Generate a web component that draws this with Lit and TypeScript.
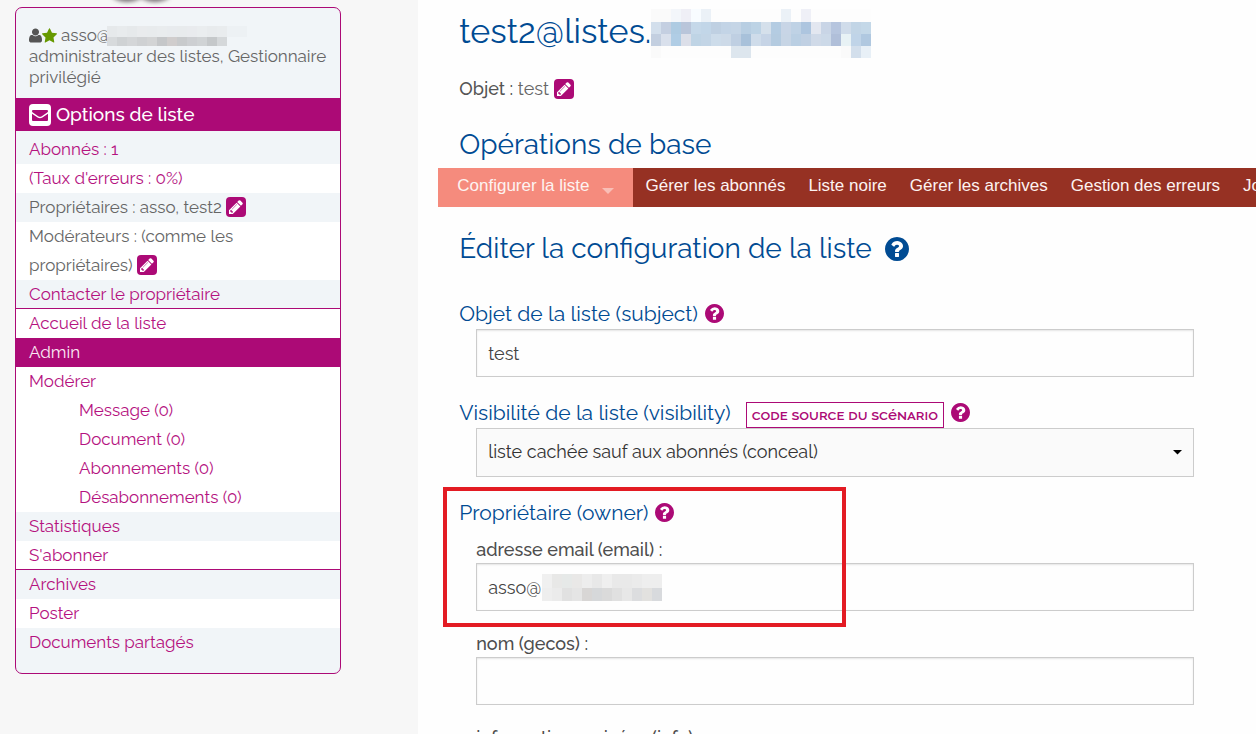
import { LitElement, html, css, svg, nothing } from "lit";
import { customElement, property } from "lit/decorators.js";

const PATHS: Record<string, string> = {
  pencil:
    "M491 1536l91-91-235-235-91 91v107h128v128h107zm523-928q0-22-22-22-10 0-17 7l-542 542q-7 7-7 17 0 22 22 22 10 0 17-7l542-542q7-7 7-17zm-54-192l416 416-832 832h-416v-416zm683 96q0 53-37 90l-166 166-416-416 166-165q36-38 90-38 53 0 91 38l235 234q37 39 37 91z",
  help:
    "M1024 1376v-192q0-14-9-23t-23-9h-192q-14 0-23 9t-9 23v192q0 14 9 23t23 9h192q14 0 23-9t9-23zm256-672q0-88-55.500-163t-138.500-116-170-41q-243 0-371 213-15 24 8 42l132 100q7 6 19 6 16 0 25-12 53-68 86-92 34-24 86-24 48 0 85.500 26t37.500 59q0 38-20 61t-68 45q-63 28-115.500 86.500t-52.500 125.500v36q0 14 9 23t23 9h192q14 0 23-9t9-23q0-19 21.500-49.500t54.500-49.500q32-18 49-28.500t46-35 44.500-48 28-60.500 12.500-81zm384 192q0 209-103 385.500t-279.500 279.500-385.500 103-385.500-103-279.500-279.500-103-385.500 103-385.500 279.500-279.500 385.500-103 385.500 103 279.500 279.500 103 385.500z",
  star:
    "M1728 647q0 22-26 48l-363 354 86 500q1 7 1 20 0 21-10.500 35.500t-30.500 14.500q-19 0-40-12l-449-236-449 236q-22 12-40 12-21 0-31.500-14.500t-10.500-35.500q0-6 2-20l86-500-364-354q-25-27-25-48 0-37 56-46l502-73 225-455q19-41 49-41t49 41l225 455 502 73q56 9 56 46z",
  user:
    "M1600 1405q0 120-73 189.500t-194 69.500h-874q-121 0-194-69.500t-73-189.500q0-53 3.500-103.500t14-109 26.500-108.500 43-97.500 62-81 85.500-53.500 111.500-20q9 0 42 21.500t74.500 48 108 48 133.500 21.500 133.500-21.500 108-48 74.500-48 42-21.500q61 0 111.500 20t85.500 53.500 62 81 43 97.500 26.500 108.500 14 109 3.500 103.500zm-320-893q0 159-112.500 271.500t-271.500 112.500-271.500-112.500-112.500-271.500 112.500-271.500 271.500-112.500 271.500 112.500 112.500 271.500z",
};

const BOXES: Record<string, string> = {
  pencil: "128 128 1536 1536",
  help: "128 128 1536 1536",
  star: "64 64 1664 1664",
  user: "192 128 1408 1536",
};

const icon = (name: string) => html`
  <svg class="icon ${name}" viewBox=${BOXES[name]} aria-hidden="true">
    <path fill="currentColor" d=${PATHS[name]}></path>
  </svg>
`;

const editLink = (label: string) => html`<a class="edit" href="#" aria-label=${label}>${icon("pencil")}</a>`;

/** Pixelated block that hides a private domain name. */
@customElement("masked-text")
export class MaskedText extends LitElement {
  @property({ attribute: false }) rows: string[][] = [];
  @property({ attribute: false }) heights: number[] = [];
  @property({ type: Number }) cell = 10;

  static styles = css`
    :host {
      display: inline-block;
    }
    svg {
      display: block;
    }
  `;

  render() {
    const width = Math.max(0, ...this.rows.map((r) => r.length)) * this.cell;
    const height = this.heights.reduce((a, b) => a + b, 0);
    let y = 0;
    const cells = this.rows.map((row, r) => {
      const top = y;
      y += this.heights[r];
      return row.map((c, i) =>
        c
          ? svg`<rect x=${i * this.cell} y=${top} width=${this.cell} height=${this.heights[r]} fill=${"#" + c}></rect>`
          : nothing
      );
    });
    return html`<svg width=${width} height=${height} shape-rendering="crispEdges" aria-hidden="true">${cells}</svg>`;
  }
}

const split = (s: string) => s.split(" ").map((c) => (c === "-" ? "" : c));

const TITLE_MASK = [
  split("fafafa fafafa f3f6fa efeff6 f8fcff ebf1f7 fdfdfd fdfdfd fdfdfd fdfdfd fdfdfd fdfdfd fdfdfd ebf1f7 fdfdfd eff0f7 fdfdfd fdfdfd fdfdfd fdfdfd fdfdfd fdfdfd"),
  split("d3dfec c4cfe1 aecbe2 b9c5da c5d8e9 c2d6e8 bfd0e2 c3d4e6 c5d5e6 b8cee2 bdd3e5 d5e0eb b4cce2 c8d5e6 bfd2e5 adc5df e3e7f0 c9d5e6 b6c5de d0dcea c2d5e6 c4d8e8"),
  split("c3cfe0 d9e0ec b0cde5 dcdfe9 bfd4e5 c3d5e6 cddcea cddae8 bfcfe2 a8c1da cfdcea c6d4e6 b4cbe0 c7d5e5 bacfe3 c0d0e3 d0dae8 ccd9e8 b0bfd9 e8f2f5 c0d4e8 b0c8e0"),
  split("fafafa fdfdfd fdfdfd fdfdfd fdfdfd fdfdfd fdfdfd fdfdfd dde6ee dde6ee fdfdfd fdfdfd fdfdfd fdfdfd fdfdfd fdfdfd fdfdfd fdfdfd fdfdfd fafafa d3dfec e8f0f7"),
];

const USER_MASK = [
  split("e6e9eb e8ebed e6e9eb e9ebed e8ebed e9ecee e8ebee e8ebed e9ebee eaedef e8ebed e9ecee edf1f4 edf1f4"),
  split("d7dadc cfd2d4 d4d6d8 cfd1d3 d3d4d5 c5c7c9 d0cdcd c8cacc cdcfd2 d0d3d5 c5c8ca d5d8da - -"),
];

const EMAIL_MASK = [
  split("f0f0f0 e8e8e7 e6e9e8 e9e8e7 ededed e8e8e8 efefef e9e9e9 e9e9e9 ebebeb eeeeee eeeeee"),
  split("eeeeee ebebeb e1e1e1 e5e5e5 d8d6d5 d6d8da dadada e0e0e0 e7e7e7 dcdddf e2e1df d8dadd"),
];

@customElement("list-sidebar")
export class ListSidebar extends LitElement {
  static styles = css`
    :host {
      display: block;
      padding: 0 77px 0 15px;
      font-size: 17px;
      line-height: 29px;
    }
    .logo {
      display: block;
      height: 7px;
      width: 100%;
    }
    .panel {
      border: 1px solid #ac0a76;
      border-radius: 7px;
      background: #f1f5f8;
      overflow: hidden;
      padding-bottom: 16px;
      color: #666;
    }
    .user {
      padding: 17px 13px 10px;
      line-height: 21px;
    }
    .account {
      display: flex;
      align-items: center;
      height: 21px;
    }
    .account span {
      padding-left: 4px;
    }
    .account masked-text {
      margin-left: -4px;
    }
    .user p {
      margin: 0;
    }
    .icon.user {
      padding: 0;
      width: 13px;
      height: 15px;
      color: #555;
    }
    .star {
      width: 15px;
      height: 16px;
      color: #690;
    }
    h2 {
      margin: 0;
      padding: 0 13px;
      height: 33px;
      display: flex;
      align-items: center;
      gap: 5px;
      background: #ac0a76;
      color: #fff;
      font-size: 19px;
      font-weight: 500;
    }
    .mail {
      width: 22px;
      height: 22px;
    }
    ul {
      list-style: none;
      margin: 0;
      padding: 0;
    }
    li {
      box-sizing: border-box;
      min-height: 29px;
      padding: 0 13px;
      background: #fff;
    }
    li.alt {
      background: #f1f5f8;
    }
    li.first {
      padding-top: 4px;
    }
    li.end {
      height: 29px;
      border-bottom: 1px solid #ac0a76;
    }
    li.current {
      background: #ac0a76;
    }
    li.sub {
      padding-left: 63px;
    }
    a {
      color: #b5127f;
      text-decoration: none;
    }
    .current a {
      color: #fbe9f4;
    }
    .edit {
      display: inline-flex;
      align-items: center;
      justify-content: center;
      width: 20px;
      height: 20px;
      border-radius: 4px;
      background: #ac0a76;
      color: #fff;
      vertical-align: -1px;
    }
    .pencil {
      width: 14px;
      height: 14px;
    }
  `;

  private item(text: string, cls = "") {
    return html`<li class=${cls}><a href="#">${text}</a></li>`;
  }

  render() {
    return html`
      <svg class="logo" aria-hidden="true">
        <defs>
          <filter id="soft" x="-20%" y="-100%" width="140%" height="300%"><feGaussianBlur stdDeviation="2"></feGaussianBlur></filter>
        </defs>
        <g filter="url(#soft)" fill="#777074">
          <ellipse cx="112" cy="-7" rx="16" ry="9"></ellipse>
          <ellipse cx="140" cy="-7" rx="16" ry="9"></ellipse>
        </g>
      </svg>
      <aside class="panel">
        <div class="user">
          <div class="account">
            ${icon("user")}${icon("star")}<span>asso@</span
            ><masked-text .rows=${USER_MASK} .heights=${[11, 9]} .cell=${10}></masked-text>
          </div>
          <p>administrateur des listes, Gestionnaire privilégié</p>
        </div>
        <h2>
          <svg class="mail" viewBox="0 0 22 22" aria-hidden="true">
            <rect width="22" height="22" rx="4" fill="#fff"></rect>
            <path fill="#ac0a76" d="M4 6h14q1 0 1 1.200q0 .8-.8 1.400l-5.400 3.600q-1.800 1.200-3.600 0l-5.400-3.600q-.8-.6-.8-1.400q0-1.200 1-1.200z"></path>
            <path fill="#ac0a76" d="M3 9.800l5.600 3.700q2.400 1.500 4.800 0l5.600-3.700v6.200q0 1-1 1h-14q-1 0-1-1z"></path>
          </svg>
          Options de liste
        </h2>
        <ul>
          ${this.item("Abonnés : 1", "alt first")} ${this.item("(Taux d'erreurs : 0%)")}
          <li class="alt">Propriétaires : asso, test2 ${editLink("Modifier les propriétaires")}</li>
          <li>Modérateurs : (comme les<br />propriétaires) ${editLink("Modifier les modérateurs")}</li>
          ${this.item("Contacter le propriétaire", "alt end")} ${this.item("Accueil de la liste")}
          ${this.item("Admin", "current")} ${this.item("Modérer")} ${this.item("Message (0)", "sub")}
          ${this.item("Document (0)", "sub")} ${this.item("Abonnements (0)", "sub")}
          ${this.item("Désabonnements (0)", "sub")} ${this.item("Statistiques", "alt")}
          ${this.item("S'abonner", "end")} ${this.item("Archives", "alt")} ${this.item("Poster")}
          ${this.item("Documents partagés", "alt")}
        </ul>
      </aside>
    `;
  }
}

@customElement("app-root")
export class AppRoot extends LitElement {
  static styles = css`
    :host {
      display: grid;
      grid-template-columns: minmax(0, 333fr) minmax(0, 667fr);
      height: 100vh;
      overflow: hidden;
      font-family: Raleway, "Open Sans", "Noto Sans", sans-serif;
      color: #555;
      background: #fefefe;
    }
    .side {
      background: #f7f7f7;
      min-height: 100vh;
    }
    main {
      padding-left: 20px;
    }
    h1,
    h2,
    h3 {
      margin: 0;
      color: #004b93;
      font-weight: 400;
    }
    h1 {
      display: flex;
      align-items: flex-start;
      height: 50px;
      padding: 9px 0 0 21px;
      font-size: 34px;
      line-height: 44px;
    }
    .subject {
      margin: 0;
      padding: 15px 0 0 21px;
      font-size: 18px;
      font-weight: 500;
      line-height: 29px;
    }
    .subject span {
      color: #666;
      font-weight: 400;
    }
    .edit {
      display: inline-flex;
      align-items: center;
      justify-content: center;
      width: 20px;
      height: 20px;
      border-radius: 4px;
      background: #ac0a76;
      color: #fff;
      vertical-align: -1px;
    }
    .pencil {
      width: 14px;
      height: 14px;
    }
    h2 {
      padding: 22px 0 4px 21px;
      font-size: 28px;
      line-height: 39px;
    }
    nav {
      display: flex;
      height: 39px;
      overflow: hidden;
      background: #963123;
      font-family: "Liberation Sans", Arial, sans-serif;
      font-size: 17px;
      line-height: 35px;
      white-space: nowrap;
    }
    nav a {
      flex: none;
      padding: 0 12px 0 11px;
      color: #fdf3f1;
      text-decoration: none;
    }
    nav .on {
      display: flex;
      align-items: center;
      gap: 12px;
      padding: 0 19px;
      margin-right: 2px;
      background: #f58b7d;
      line-height: 35px;
    }
    nav .on span {
      align-self: flex-start;
    }
    .caret {
      width: 12px;
      height: 6px;
      margin-top: 6px;
    }
    h2.edit-title {
      display: flex;
      align-items: center;
      gap: 13px;
      padding: 22px 0 29px 21px;
      line-height: 40px;
    }
    .title-help {
      width: 24px;
      height: 24px;
    }
    form {
      padding: 0 62px 0 21px;
    }
    .field {
      position: relative;
      padding-bottom: 20px;
    }
    .head {
      display: flex;
      align-items: center;
      height: 31px;
      gap: 7px;
      color: #004b93;
      font-size: 21px;
      line-height: 31px;
      white-space: nowrap;
    }
    .body {
      margin-left: 17px;
    }
    .help {
      display: flex;
      padding: 0;
      border: 0;
      background: none;
      color: #ac0a76;
    }
    .help .icon {
      width: 19px;
      height: 19px;
    }
    .source {
      box-sizing: border-box;
      height: 26px;
      margin: 4px 0 0 8px;
      padding: 0 5px;
      border: 1px solid #ac0a76;
      background: #fff;
      color: #ac0a76;
      font-family: inherit;
      font-size: 15px;
      font-weight: 600;
      font-variant-caps: all-small-caps;
      line-height: 24px;
    }
    input,
    select {
      display: block;
      box-sizing: border-box;
      width: 100%;
      height: 48px;
      margin: 0;
      padding: 0 11px;
      border: 1px solid #ccc;
      border-radius: 0;
      background: #fefefe;
      color: #444;
      font-family: inherit;
      font-size: 18px;
      appearance: none;
    }
    input {
      box-shadow: inset 0 1px 2px rgba(10, 10, 10, 0.1);
    }
    select {
      height: 49px;
      padding-bottom: 2px;
      background: #fafafa;
      color: #333;
    }
    .wrap {
      position: relative;
    }
    .wrap .arrow {
      position: absolute;
      right: 12px;
      top: 22px;
      width: 9px;
      height: 5px;
    }
    .wrap masked-text {
      position: absolute;
      left: 66px;
      top: 11px;
    }
    .sub {
      display: block;
      height: 28px;
      font-size: 18px;
      font-weight: 500;
      line-height: 30px;
      color: #4d4d4d;
    }
    .owner .head {
      margin-bottom: 7px;
    }
    .owner .row {
      padding-bottom: 18px;
    }
    .mark {
      position: absolute;
      left: -16px;
      top: -10px;
      width: 395px;
      height: 132px;
      border: 4px solid #e31b23;
      pointer-events: none;
    }
  `;

  private help(label: string) {
    return html`<button class="help" type="button" aria-label=${label}>${icon("help")}</button>`;
  }

  render() {
    const tabs = ["Gérer les abonnés", "Liste noire", "Gérer les archives", "Gestion des erreurs", "Journaux"];
    return html`
      <div class="side"><list-sidebar></list-sidebar></div>
      <main>
        <h1>
          <span>test2@listes.</span><masked-text .rows=${TITLE_MASK} .heights=${[13, 12, 12, 12]}></masked-text>
        </h1>
        <p class="subject">Objet : <span>test</span> ${editLink("Modifier l'objet")}</p>
        <h2>Opérations de base</h2>
        <nav>
          <a class="on" href="#"
            ><span>Configurer la liste</span
            ><svg class="caret" viewBox="0 0 12 6" aria-hidden="true"><path d="M0 0h12l-6 6z" fill="#f9beb6"></path></svg
          ></a>
          ${tabs.map((t) => html`<a href="#">${t}</a>`)}
        </nav>
        <h2 class="edit-title">
          Éditer la configuration de la liste
          <svg class="title-help" viewBox=${BOXES.help} aria-hidden="true">
            <path fill="currentColor" d=${PATHS.help}></path>
          </svg>
        </h2>
        <form>
          <div class="field">
            <div class="head"><label for="subject">Objet de la liste (subject)</label>${this.help("Aide : objet")}</div>
            <div class="body"><input id="subject" type="text" .value=${"test"} /></div>
          </div>
          <div class="field">
            <div class="head">
              <label for="visibility">Visibilité de la liste (visibility)</label>
              <button class="source" type="button">CODE SOURCE DU SCéNARIO</button>
              ${this.help("Aide : visibilité")}
            </div>
            <div class="body wrap">
              <select id="visibility">
                <option>liste cachée sauf aux abonnés (conceal)</option>
              </select>
              <svg class="arrow" viewBox="0 0 9 5" aria-hidden="true"><path d="M0 0h9l-4.500 4.500z" fill="#000"></path></svg>
            </div>
          </div>
          <div class="field owner">
            <div class="head"><span>Propriétaire (owner)</span>${this.help("Aide : propriétaire")}</div>
            <div class="body">
              <div class="row">
                <label class="sub" for="email">adresse email (email) :</label>
                <div class="wrap">
                  <input id="email" type="text" .value=${"asso@"} />
                  <masked-text .rows=${EMAIL_MASK} .heights=${[14, 13]} .cell=${10}></masked-text>
                </div>
              </div>
              <div class="row">
                <label class="sub" for="gecos">nom (gecos) :</label>
                <input id="gecos" type="text" />
              </div>
              <div class="row">
                <label class="sub" for="info">informations privées (info) :</label>
                <input id="info" type="text" />
              </div>
            </div>
            <div class="mark"></div>
          </div>
        </form>
      </main>
    `;
  }
}
